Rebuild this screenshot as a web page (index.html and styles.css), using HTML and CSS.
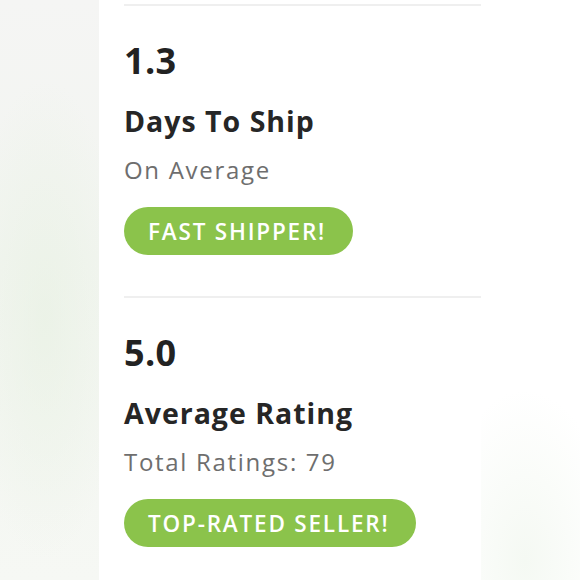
FILE: index.html
```html
<!DOCTYPE html>
<html lang="en">
<head>
<meta charset="utf-8">
<title>Seller stats</title>
<link rel="stylesheet" href="styles.css">
</head>
<body>
<div class="backdrop">
  <main class="card">
    <section class="stat">
      <div class="divider"></div>
      <div class="stat-body">
        <div class="value">1.3</div>
        <div class="title">Days To Ship</div>
        <div class="sub">On Average</div>
        <div class="badge">FAST SHIPPER!</div>
      </div>
    </section>
    <section class="stat">
      <div class="divider"></div>
      <div class="stat-body">
        <div class="value">5.0</div>
        <div class="title">Average Rating</div>
        <div class="sub">Total Ratings: 79</div>
        <div class="badge">TOP-RATED SELLER!</div>
      </div>
    </section>
  </main>
</div>
</body>
</html>
```

FILE: styles.css
```css
html, body {
  margin: 0;
  padding: 0;
  height: 100%;
  overflow: hidden;
}

body {
  font-family: "Open Sans", "Noto Sans", sans-serif;
  color: #262626;
  background-color: #ffffff;
}

.backdrop {
  height: 100%;
  display: flex;
  background:
    radial-gradient(ellipse 80px 240px at 45px 320px, rgba(232, 241, 227, 0.7), rgba(232, 241, 227, 0) 100%),
    radial-gradient(ellipse 90px 170px at 525px 560px, rgba(238, 245, 235, 0.6), rgba(238, 245, 235, 0) 100%),
    linear-gradient(to bottom, #f5f5f4 0%, #f2f5f0 45%, #f6f8f4 100%) left top / 99px 100% no-repeat,
    #ffffff;
}

.card {
  margin-left: 99px;
  width: 382px;
  height: 100%;
  background: #ffffff;
  display: flex;
  flex-direction: column;
}

.stat {
  display: flex;
  flex-direction: column;
}

.stat:first-child {
  padding-top: 4px;
}

.divider {
  margin-left: 25px;
  height: 2px;
  background: #efefef;
}

.stat-body {
  padding: 37px 0 41px 25px;
  display: flex;
  flex-direction: column;
  align-items: flex-start;
}

.value {
  font-size: 36px;
  line-height: 36px;
  font-weight: 700;
  color: #222222;
  letter-spacing: 0.3px;
}

.title {
  margin-top: 28px;
  font-size: 28.5px;
  line-height: 28px;
  font-weight: 700;
  color: #262626;
  letter-spacing: 1px;
}

.sub {
  margin-top: 23px;
  font-size: 24px;
  line-height: 23px;
  font-weight: 400;
  color: #6e6e6e;
  letter-spacing: 1.7px;
}

.badge {
  margin-top: 26px;
  height: 48px;
  padding: 0 27px 0 24px;
  border-radius: 24px;
  background: #8bc34b;
  color: #ffffff;
  font-size: 22.5px;
  font-weight: 600;
  letter-spacing: 1.8px;
  display: flex;
  align-items: center;
}
```
